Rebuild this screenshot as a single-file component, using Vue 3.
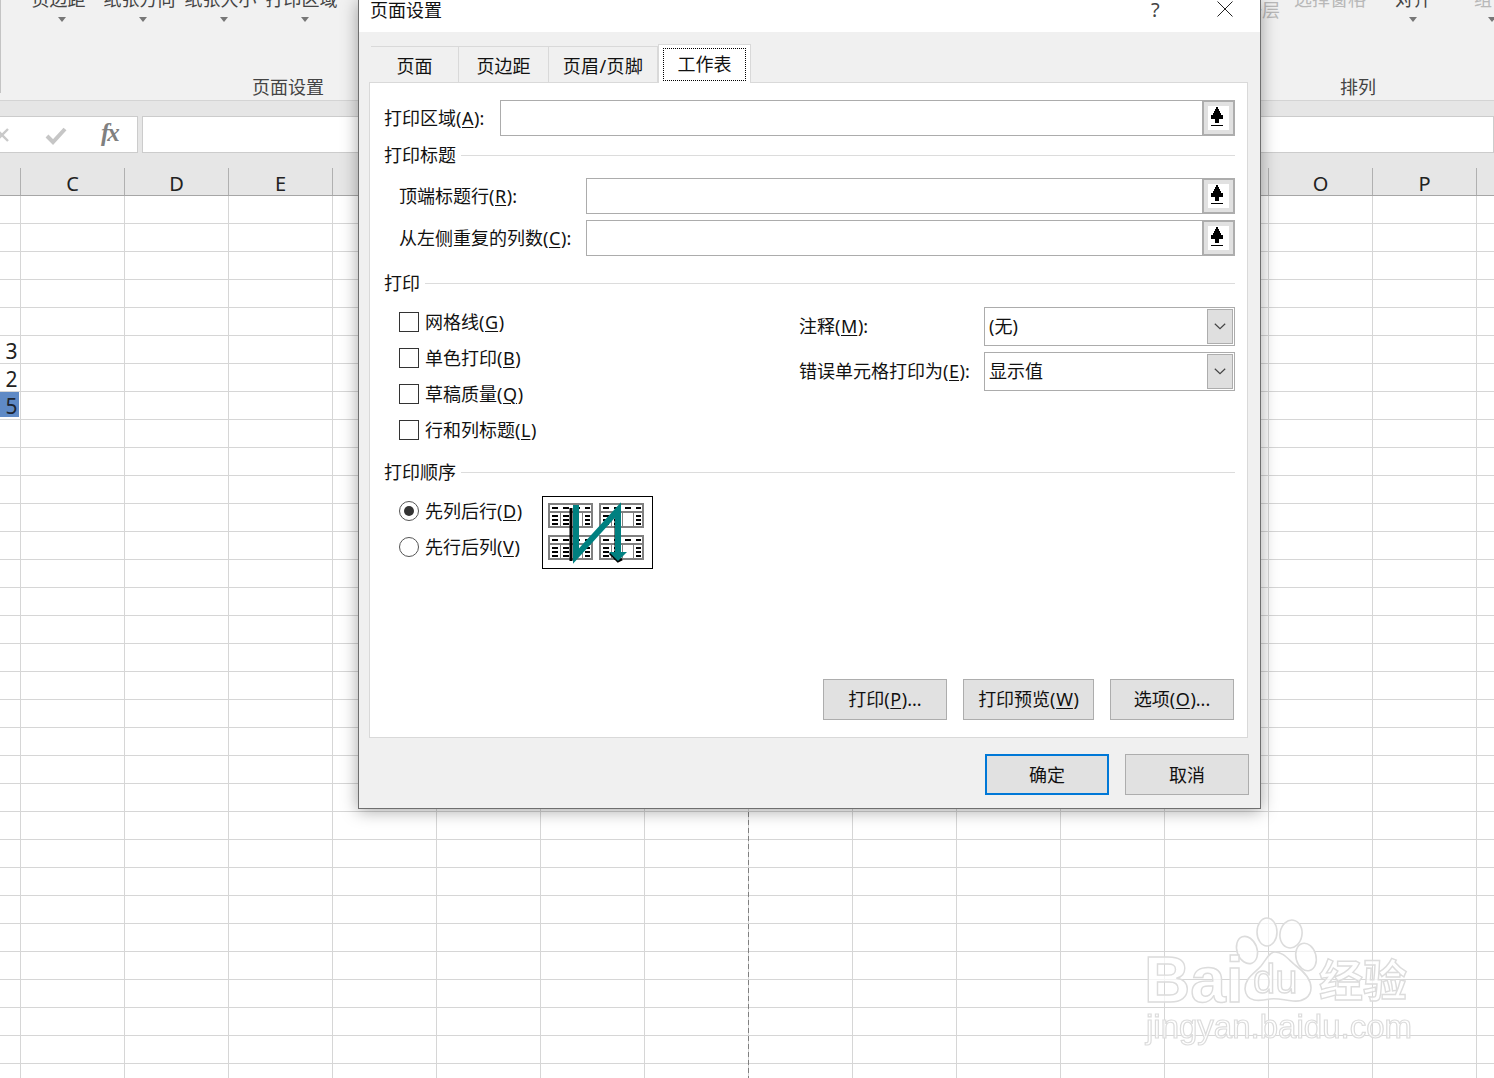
<script setup>
const columns = ['C', 'D', 'E', 'F', 'G', 'H', 'I', 'J', 'K', 'L', 'M', 'N', 'O', 'P', 'Q']
const pageItems = ['页边距', '纸张方向', '纸张大小', '打印区域']
const checks = [
  ['网格线(', 'G', ')'],
  ['单色打印(', 'B', ')'],
  ['草稿质量(', 'Q', ')'],
  ['行和列标题(', 'L', ')']
]
const miniTables = [
  [6, 7],
  [57, 7],
  [6, 39],
  [57, 39]
]
const titleRows = [
  ['顶端标题行(', 'R', '):'],
  ['从左侧重复的列数(', 'C', '):']
]
const selects = [
  ['注释(', 'M', '):', '(无)'],
  ['错误单元格打印为(', 'E', '):', '显示值']
]
</script>

<template>
  <div class="app">
    <header class="ribbon">
      <section class="group group-page">
        <div class="items">
          <div v-for="item in pageItems" :key="item" class="item"><span class="shift">{{ item }}</span><i class="caret"></i></div>
        </div>
        <div class="group-label">页面设置</div>
      </section>
      <section class="group group-arrange">
        <div class="items">
          <div class="item w-layer off"><span>下移一层</span></div>
          <div class="item w-pane off"><span>选择窗格</span></div>
          <div class="item w-align"><span>对齐</span><i class="caret"></i></div>
          <div class="item w-group off"><span>组合</span><i class="caret"></i></div>
        </div>
        <div class="group-label">排列</div>
      </section>
    </header>

    <div class="formula-band">
      <div class="fx-box">
        <svg class="fx-x" width="14" height="16" viewBox="0 0 14 16"><path d="M-4 2 L8 14 M8 2 L-4 14" stroke="#c9c9c9" stroke-width="2.4" fill="none"/></svg>
        <svg class="fx-check" width="22" height="18" viewBox="0 0 22 18"><path d="M2 9 L8 15 L20 2" stroke="#c6c6c6" stroke-width="4" fill="none"/></svg>
        <span class="fx-text">fx</span>
      </div>
      <div class="formula-input"></div>
    </div>

    <div class="col-head">
      <div v-for="c in columns" :key="c" class="col-cell">{{ c }}</div>
    </div>

    <main class="sheet">
      <div class="cells">
        <div class="cell">3</div>
        <div class="cell">2</div>
        <div class="cell selected">5</div>
      </div>
    </main>

    <div class="page-break"></div>

    <svg class="watermark" width="300" height="140" viewBox="0 0 300 140">
      <g class="wm-shape">
        <ellipse cx="117" cy="40" rx="10" ry="14" transform="rotate(-20 117 40)"/>
        <ellipse cx="137" cy="22" rx="10" ry="14"/>
        <ellipse cx="161" cy="24" rx="11" ry="14" transform="rotate(10 161 24)"/>
        <ellipse cx="176" cy="47" rx="10" ry="14" transform="rotate(-15 176 47)"/>
        <path d="M145 42 C153 42 158 49 165 55 C172 60 181 68 181 78 C181 87 173 92 163 91 C153 90 148 88 140 89 C130 91 116 93 115 79 C115 68 124 64 131 56 C136 50 139 42 145 42 Z"/>
      </g>
      <g class="wm-text">
        <text x="14" y="92" class="wm-bai">Bai</text>
        <text x="123" y="83" class="wm-du">du</text>
        <text x="189" y="87" class="wm-cn">经验</text>
        <text x="16" y="128" class="wm-url">jingyan.baidu.com</text>
      </g>
    </svg>

    <div class="dialog">
      <div class="titlebar">
        <span class="title">页面设置</span>
        <span class="help">?</span>
        <svg class="close" width="16" height="16" viewBox="0 0 16 16"><path d="M0.5 0.5 L15.5 15.5 M15.5 0.5 L0.5 15.5" stroke="#222" stroke-width="1" fill="none"/></svg>
      </div>

      <div class="tabs">
        <div class="tab t1">页面</div>
        <div class="tab t2">页边距</div>
        <div class="tab t3">页眉/页脚</div>
        <div class="tab active"><span class="focus">工作表</span></div>
      </div>

      <div class="panel">
        <div class="field first">
          <label class="label l-area">打印区域(<u>A</u>):</label>
          <div class="input">
            <button class="ref">
              <svg width="12" height="19" viewBox="0 0 12 19" shape-rendering="crispEdges"><path d="M5 0h2v2h1v2h1v2h1v2h2v4H8v4H4v-4H0V8h2V6h1V4h1V2h1z" fill="#000"/><rect x="0" y="18" width="12" height="1" fill="#000"/></svg>
            </button>
          </div>
        </div>

        <div class="legend l-title"><span>打印标题</span><i></i></div>

        <div v-for="(row, i) in titleRows" :key="row[1]" class="field indent" :class="i === 0 ? 'second' : 'third'">
          <label class="label l-title-row">{{ row[0] }}<u>{{ row[1] }}</u>{{ row[2] }}</label>
          <div class="input">
            <button class="ref">
              <svg width="12" height="19" viewBox="0 0 12 19" shape-rendering="crispEdges"><path d="M5 0h2v2h1v2h1v2h1v2h2v4H8v4H4v-4H0V8h2V6h1V4h1V2h1z" fill="#000"/><rect x="0" y="18" width="12" height="1" fill="#000"/></svg>
            </button>
          </div>
        </div>

        <div class="legend l-print"><span>打印</span><i></i></div>

        <div class="print-opts">
          <div class="check-col">
            <div v-for="c in checks" :key="c[1]" class="check-row">
              <span class="box"></span>
              <span>{{ c[0] }}<u>{{ c[1] }}</u>{{ c[2] }}</span>
            </div>
          </div>
          <div class="select-col">
            <div v-for="s in selects" :key="s[1]" class="select-row">
              <label class="select-label">{{ s[0] }}<u>{{ s[1] }}</u>{{ s[2] }}</label>
              <div class="select">
                <span>{{ s[3] }}</span>
                <div class="drop">
                  <svg width="12" height="7" viewBox="0 0 12 7"><path d="M0.8 0.8 L6 5.6 L11.2 0.8" stroke="#444" stroke-width="1.2" fill="none"/></svg>
                </div>
              </div>
            </div>
          </div>
        </div>

        <div class="legend l-order"><span>打印顺序</span><i></i></div>

        <div class="order">
          <div class="radio-col">
            <div class="radio-row"><span class="radio on"></span><span>先列后行(<u>D</u>)</span></div>
            <div class="radio-row"><span class="radio"></span><span>先行后列(<u>V</u>)</span></div>
          </div>
          <svg class="preview" width="111" height="73" viewBox="0 0 111 73">
            <rect x="0.5" y="0.5" width="110" height="72" fill="#fff" stroke="#000"/>
            <g v-for="t in miniTables" :key="t.join()" :transform="`translate(${t[0]} ${t[1]})`">
              <rect x="1" y="1" width="43" height="23" fill="#fff" stroke="#808080" stroke-width="2"/>
              <path d="M1 9H44" stroke="#808080" stroke-width="2"/>
              <path d="M12.5 8V24M23.5 8V24M34.5 8V24" stroke="#808080" stroke-width="1"/>
              <path d="M4 5h6M15 5h6M26 5h6M37 5h5M4 13h6M15 13h6M37 13h5M4 17h6M15 17h6M37 17h5M4 21h6M15 21h6M37 21h5" stroke="#000" stroke-width="2"/>
            </g>
            <path d="M29 12V65M74 20V64" stroke="#000" stroke-width="3" fill="none"/>
            <path d="M68 57L76 65L80 63" stroke="#000" stroke-width="3" fill="none"/>
            <path d="M34 9V60L76 14V60" stroke="#008080" stroke-width="6" fill="none"/>
            <path d="M67 56H85L76 65Z" fill="#008080"/>
          </svg>
        </div>

        <div class="panel-actions">
          <button class="btn w-124">打印(<u>P</u>)...</button>
          <button class="btn w-131">打印预览(<u>W</u>)</button>
          <button class="btn w-124">选项(<u>O</u>)...</button>
        </div>
      </div>

      <div class="footer">
        <button class="btn w-124 primary">确定</button>
        <button class="btn w-124">取消</button>
      </div>
    </div>
  </div>
</template>

<style scoped>
.app {
  position: relative;
  width: 1494px;
  height: 1078px;
  overflow: hidden;
  background: #fff;
  font-family: "Noto Sans", "Noto Sans CJK SC", sans-serif;
  font-size: 18px;
  color: #111;
}
.ribbon {
  display: flex;
  height: 101px;
  box-sizing: border-box;
  background: #f1f1f1;
  border-bottom: 1px solid #d4d4d4;
  overflow: hidden;
}
.group {
  display: flex;
  flex-direction: column;
  flex: none;
}
.group-page {
  width: 576px;
  margin-right: 604px;
  position: relative;
}
.group-page::before {
  content: "";
  position: absolute;
  left: 0;
  top: 0;
  width: 1px;
  height: 93px;
  background: #c4c4c4;
}
.group-arrange {
  width: 356px;
}
.items {
  display: flex;
  height: 88px;
  margin-top: -11px;
}
.group-page .items {
  padding-left: 21px;
}
.item {
  width: 81px;
  flex: none;
  display: flex;
  flex-direction: column;
  align-items: center;
  color: #444;
  line-height: 20px;
  white-space: nowrap;
}
.item.off {
  color: #b8b8b8;
}
.shift {
  margin-right: 6px;
}
.w-layer {
  width: 100px;
  align-items: flex-end;
  padding-top: 11px;
}
.w-pane {
  width: 72px;
  margin-left: 14px;
}
.w-align {
  width: 36px;
  margin-left: 29px;
}
.w-group {
  width: 36px;
  margin-left: 43px;
}
.caret {
  display: block;
  width: 0;
  height: 0;
  margin-top: 8px;
  border-left: 4.5px solid transparent;
  border-right: 4.5px solid transparent;
  border-top: 5px solid #777;
}
.group-label {
  text-align: center;
  line-height: 20px;
  color: #444;
}
.formula-band {
  display: flex;
  height: 52px;
  box-sizing: border-box;
  padding-top: 15px;
  background: #e6e6e6;
}
.fx-box {
  position: relative;
  width: 138px;
  height: 37px;
  flex: none;
  box-sizing: border-box;
  background: #fff;
  border: 1px solid #ccc;
  border-left: 0;
}
.fx-x {
  position: absolute;
  left: 0;
  top: 10px;
}
.fx-check {
  position: absolute;
  left: 45px;
  top: 10px;
}
.fx-text {
  position: absolute;
  left: 101px;
  top: 1px;
  font: italic bold 25px/30px "Liberation Serif", serif;
  letter-spacing: -2px;
  color: #808080;
}
.formula-input {
  flex: 1;
  height: 37px;
  margin-left: 4px;
  box-sizing: border-box;
  background: #fff;
  border: 1px solid #ccc;
}
.col-head {
  display: flex;
  height: 43px;
  box-sizing: border-box;
  padding: 15px 0 0 20px;
  background: #e6e6e6;
  border-bottom: 1px solid #a6a6a6;
  overflow: hidden;
}
.col-cell {
  width: 104px;
  flex: none;
  box-sizing: border-box;
  border-left: 1px solid #b0b0b0;
  text-align: center;
  font-size: 20px;
  line-height: 31px;
  color: #222;
}
.sheet {
  height: 882px;
  background-image:
    linear-gradient(to right, #d6d6d6 1px, transparent 1px),
    linear-gradient(to bottom, #d6d6d6 1px, transparent 1px);
  background-size: 104px 28px;
  background-position: 20px 27px;
}
.cells {
  width: 19px;
  padding-top: 140px;
}
.cell {
  height: 28px;
  padding-left: 4px;
  box-sizing: border-box;
  text-align: center;
  font-size: 21px;
  line-height: 31px;
  color: #222;
}
.cell.selected {
  height: 25px;
  line-height: 29px;
  background: #5f8ac6;
  color: #1c2430;
}
.page-break {
  position: absolute;
  left: 748px;
  top: 196px;
  bottom: 0;
  width: 1px;
  background: repeating-linear-gradient(to bottom, #808080 0 5px, transparent 5px 8px);
}
.watermark {
  position: absolute;
  left: 1130px;
  top: 910px;
  filter: blur(0.5px);
}
.wm-shape {
  fill: rgba(255, 255, 255, 0.7);
  stroke: #dcdcdc;
  stroke-width: 1.6;
}
.wm-text {
  fill: rgba(255, 255, 255, 0.7);
  stroke: #dcdcdc;
  stroke-width: 1.4;
}
.wm-bai {
  font: bold 64px "Liberation Sans", sans-serif;
}
.wm-du {
  font: 40px "Liberation Sans", sans-serif;
}
.wm-cn {
  font: bold 44px "Noto Sans CJK SC", sans-serif;
}
.wm-url {
  font: 33px "Liberation Sans", sans-serif;
  stroke-width: 1.2;
}
.dialog {
  position: absolute;
  left: 358px;
  top: 0;
  width: 903px;
  box-sizing: border-box;
  display: flex;
  flex-direction: column;
  background: #f0f0f0;
  border: 1px solid #6f6f6f;
  border-top: 0;
  box-shadow: 0 2px 16px rgba(0, 0, 0, 0.35);
  color: #111;
}
.titlebar {
  height: 32px;
  flex: none;
  position: relative;
  background: #fff;
  overflow: hidden;
}
.title {
  position: absolute;
  left: 11px;
  top: 0;
  line-height: 20px;
}
.help {
  position: absolute;
  left: 792px;
  top: 0;
  font-size: 20px;
  line-height: 20px;
  color: #444;
}
.close {
  position: absolute;
  left: 858px;
  top: 1px;
}
.tabs {
  display: flex;
  height: 36px;
  flex: none;
  margin: 14px 0 0 12px;
}
.tab {
  box-sizing: border-box;
  display: flex;
  align-items: center;
  justify-content: center;
  border-top: 1px solid #d9d9d9;
  border-right: 1px solid #d9d9d9;
}
.t1 { width: 88px; }
.t2 { width: 90px; }
.t3 { width: 109px; letter-spacing: 0.4px; }
.tab.active {
  position: relative;
  z-index: 1;
  width: 93px;
  height: 39px;
  margin: -2px 0 -1px 0;
  padding: 3px 0 0 0;
  align-items: flex-start;
  background: #fff;
  border: 1px solid #d9d9d9;
  border-bottom: 0;
}
.focus {
  width: 83px;
  height: 33px;
  box-sizing: border-box;
  border: 1px dotted #000;
  text-align: center;
  line-height: 31px;
}
.panel {
  height: 656px;
  flex: none;
  box-sizing: border-box;
  margin-left: 10px;
  margin-right: 12px;
  padding: 0 12px 17px 14px;
  display: flex;
  flex-direction: column;
  background: #fff;
  border: 1px solid #d9d9d9;
  line-height: 20px;
}
.field {
  display: flex;
  align-items: center;
  height: 36px;
  flex: none;
}
.field.first { margin-top: 17px; }
.field.second { margin-top: 13px; }
.field.third { margin-top: 6px; }
.indent { padding-left: 15px; }
.label {
  flex: none;
  white-space: nowrap;
}
.l-area { width: 116px; }
.l-title-row { width: 187px; }
.input {
  flex: 1;
  height: 36px;
  box-sizing: border-box;
  display: flex;
  justify-content: flex-end;
  border: 1px solid #acacac;
  border-right: 0;
}
.ref {
  width: 33px;
  height: 36px;
  margin: -1px 0;
  padding: 0 3px 4px 0;
  box-sizing: border-box;
  display: flex;
  align-items: center;
  justify-content: center;
  background: #fff;
  border: 2px solid #adadad;
  box-shadow: inset 0 0 0 4px #e1e1e1;
}
.legend {
  display: flex;
  align-items: center;
  gap: 5px;
  height: 20px;
  flex: none;
}
.legend i {
  flex: 1;
  height: 1px;
  background: #dcdcdc;
}
.l-title { margin-top: 9px; }
.l-print { margin-top: 17px; }
.l-order { margin-top: 14px; }
.print-opts {
  display: flex;
  height: 155px;
  flex: none;
}
.check-col {
  width: 415px;
  flex: none;
  box-sizing: border-box;
  padding: 11px 0 0 15px;
}
.check-row, .radio-row {
  display: flex;
  align-items: center;
  gap: 6px;
  height: 36px;
}
.box {
  width: 20px;
  height: 20px;
  box-sizing: border-box;
  background: #fff;
  border: 1px solid #333;
}
.select-col {
  flex: 1;
  padding-top: 14px;
  display: flex;
  flex-direction: column;
  gap: 6px;
}
.select-row {
  display: flex;
  align-items: center;
  height: 39px;
}
.select-label {
  width: 185px;
  flex: none;
  padding-bottom: 2px;
  white-space: nowrap;
}
.select {
  flex: 1;
  height: 39px;
  box-sizing: border-box;
  display: flex;
  align-items: center;
  justify-content: space-between;
  padding: 1px 1px 1px 4px;
}
.select {
  border: 1px solid #acacac;
}
.select > span {
  padding-bottom: 2px;
}
.drop {
  width: 26px;
  height: 35px;
  box-sizing: border-box;
  display: flex;
  align-items: center;
  justify-content: center;
  background: #dfdfdf;
  border: 1px solid #adadad;
}
.order {
  display: flex;
  align-items: flex-start;
  padding: 11px 0 0 15px;
  flex: none;
}
.radio-col {
  width: 143px;
  flex: none;
}
.radio {
  width: 20px;
  height: 20px;
  box-sizing: border-box;
  display: flex;
  align-items: center;
  justify-content: center;
  border: 1px solid #555;
  border-radius: 50%;
}
.radio.on::after {
  content: "";
  width: 10px;
  height: 10px;
  border-radius: 50%;
  background: #333;
}
.preview {
  margin-top: 3px;
  flex: none;
}
.panel-actions {
  display: flex;
  justify-content: flex-end;
  gap: 16px;
  margin-top: auto;
  margin-right: 1px;
}
.btn {
  height: 41px;
  padding: 0 0 2px;
  box-sizing: border-box;
  font: inherit;
  font-size: 18px;
  color: #111;
  background: #e1e1e1;
  border: 1px solid #adadad;
}
.w-124 { width: 124px; }
.w-131 { width: 131px; }
.footer {
  display: flex;
  justify-content: flex-end;
  gap: 16px;
  padding: 16px 11px 13px 0;
}
.primary {
  border: 2px solid #0078d7;
}
u {
  margin: 0 0.6px;
  text-underline-offset: 2px;
  text-decoration-thickness: 1px;
}
</style>
